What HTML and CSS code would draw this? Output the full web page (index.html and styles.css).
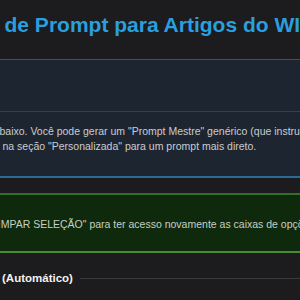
FILE: index.html
```html
<!DOCTYPE html>
<html lang="pt-BR">
<head>
<meta charset="utf-8">
<title>Gerador de Prompt</title>
<link rel="stylesheet" href="styles.css">
</head>
<body>
<main class="page">
  <h1 class="title">Gerador de Prompt para Artigos do WIX</h1>

  <section class="panel">
    <div class="panel-head"></div>
    <div class="panel-body">
      <p class="panel-text">Preencha as opções abaixo. Você pode gerar um "Prompt Mestre" genérico (que instrui a IA a escrever o artigo)<br>ou preencha os campos na seção "Personalizada" para um prompt mais direto.</p>
    </div>
  </section>

  <div class="notice">
    <p class="notice-text">Clique em "LIMPAR SELEÇÃO" para ter acesso novamente as caixas de opções.</p>
  </div>

  <div class="section-head">
    <h2 class="section-title">1. Prompt Mestre (Automático)</h2>
    <span class="section-rule"></span>
  </div>
</main>
</body>
</html>
```

FILE: styles.css
```css
html, body {
  margin: 0;
  padding: 0;
}

body {
  background: #1c1b1d;
  font-family: "Liberation Sans", Arial, sans-serif;
  overflow: hidden;
  width: 300px;
  height: 300px;
}

.page {
  display: flex;
  flex-direction: column;
}

.title {
  margin: 0 0 0 -83px;
  padding-top: 13px;
  font-size: 21px;
  line-height: 24px;
  font-weight: bold;
  color: #2a9fdf;
  white-space: nowrap;
}

.panel {
  margin-top: 22px;
  background: #1d2530;
  border-top: 1px solid #2b5674;
  border-bottom: 2px solid #2c6a96;
}

.panel-head {
  height: 51px;
  border-bottom: 1px solid #34414d;
}

.panel-body {
  padding: 12px 0 22px;
}

.panel-text {
  margin: 0 0 0 -112.5px;
  text-indent: 7.5px;
  font-size: 10.5px;
  line-height: 15px;
  color: #c9cdd1;
  white-space: nowrap;
}

.notice {
  margin-top: 15px;
  background: #0f290c;
  border-top: 2px solid #336f27;
  border-bottom: 2px solid #4a8a3a;
  padding: 21.5px 0 19.5px;
}

.notice-text {
  margin: 0 0 0 -62px;
  font-size: 10.5px;
  line-height: 15px;
  color: #c6cfc3;
  white-space: nowrap;
}

.section-head {
  margin-top: 18px;
  display: flex;
  align-items: center;
  gap: 7px;
  margin-left: -94.5px;
}

.section-title {
  margin: 0;
  font-size: 11.5px;
  line-height: 15px;
  font-weight: bold;
  color: #f2f2f2;
  white-space: nowrap;
}

.section-rule {
  flex: 1;
  height: 1px;
  background: #3a393b;
}
```
